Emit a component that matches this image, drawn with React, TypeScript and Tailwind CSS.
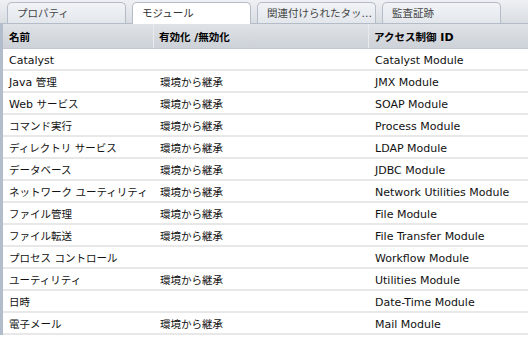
const tabs = ['プロパティ', 'モジュール', '関連付けられたタッ...', '監査証跡'];

const rows: [string, string, string][] = [
  ['Catalyst', '', 'Catalyst Module'],
  ['Java 管理', '環境から継承', 'JMX Module'],
  ['Web サービス', '環境から継承', 'SOAP Module'],
  ['コマンド実行', '環境から継承', 'Process Module'],
  ['ディレクトリ サービス', '環境から継承', 'LDAP Module'],
  ['データベース', '環境から継承', 'JDBC Module'],
  ['ネットワーク ユーティリティ', '環境から継承', 'Network Utilities Module'],
  ['ファイル管理', '環境から継承', 'File Module'],
  ['ファイル転送', '環境から継承', 'File Transfer Module'],
  ['プロセス コントロール', '', 'Workflow Module'],
  ['ユーティリティ', '環境から継承', 'Utilities Module'],
  ['日時', '', 'Date-Time Module'],
  ['電子メール', '環境から継承', 'Mail Module'],
];

// japanese runs come out wider than the original ui font, shrink them a bit
function Jp({ text }: { text: string }) {
  const parts = text.split(/([\u3000-\u9fff\uff00-\uffef]+)/).filter(Boolean);
  return (
    <span>
      {parts.map((p, i) =>
        /[\u3000-\u9fff\uff00-\uffef]/.test(p) ? (
          <span key={i} className="text-[10.5px]">
            {p}
          </span>
        ) : (
          <span key={i}>{p}</span>
        ),
      )}
    </span>
  );
}

export default function App() {
  return (
    <div
      className="h-[342px] w-[528px] overflow-hidden bg-white text-[11px] leading-none text-[#111]"
      style={{ fontFamily: '"DejaVu Sans", Verdana, "Noto Sans CJK JP", sans-serif' }}
    >
      <div className="flex h-[24px] items-end gap-[6px] border-b border-[#b4bcc7] bg-gradient-to-b from-[#eef0f3] to-[#d9dde2] pl-[7px]">
        {tabs.map((t, i) => (
          <div
            key={t}
            className={
              i === 1
                ? 'mb-[-1px] flex h-[22px] w-[119px] items-center whitespace-nowrap rounded-t-[5px] border border-b-0 border-[#b4bcc7] bg-white pl-[9px] text-[#333]'
                : 'flex h-[21px] w-[119px] items-center whitespace-nowrap rounded-t-[5px] border border-b-0 border-[#b4bcc7] bg-gradient-to-b from-[#f1f3f6] to-[#e3e7ec] pl-[9px] text-[#444]'
            }
          >
            <Jp text={t} />
          </div>
        ))}
      </div>
      <div className="flex">
        <div className="w-[3px] shrink-0 bg-[#b3bccb]" />
        <div className="flex-1">
          <div className="flex h-[25px] items-center border-b border-[#c4c9cf] bg-gradient-to-b from-[#dfe2e6] to-[#cdd2d8] font-bold text-black">
            <div className="flex h-full w-[151px] items-center border-r border-[#e9ecef] pl-[6px] pt-[3px]">
              <Jp text="名前" />
            </div>
            <div className="flex h-full w-[215px] items-center border-r border-[#e9ecef] pl-[5px] pt-[3px]">
              <Jp text="有効化 /無効化" />
            </div>
            <div className="flex h-full flex-1 items-center pl-[5px] pt-[3px]">
              <Jp text="アクセス制御 ID" />
            </div>
          </div>
          {rows.map(([a, b, c]) => (
            <div key={a} className="flex h-[22px] items-center whitespace-nowrap border-b-2 border-[#e8e8e8] pt-[2px]">
              <div className="w-[151px] pl-[6px]">
                <Jp text={a} />
              </div>
              <div className="w-[215px] pl-[6px]">
                <Jp text={b} />
              </div>
              <div className="flex-1 pl-[6px]">{c}</div>
            </div>
          ))}
        </div>
      </div>
    </div>
  );
}
